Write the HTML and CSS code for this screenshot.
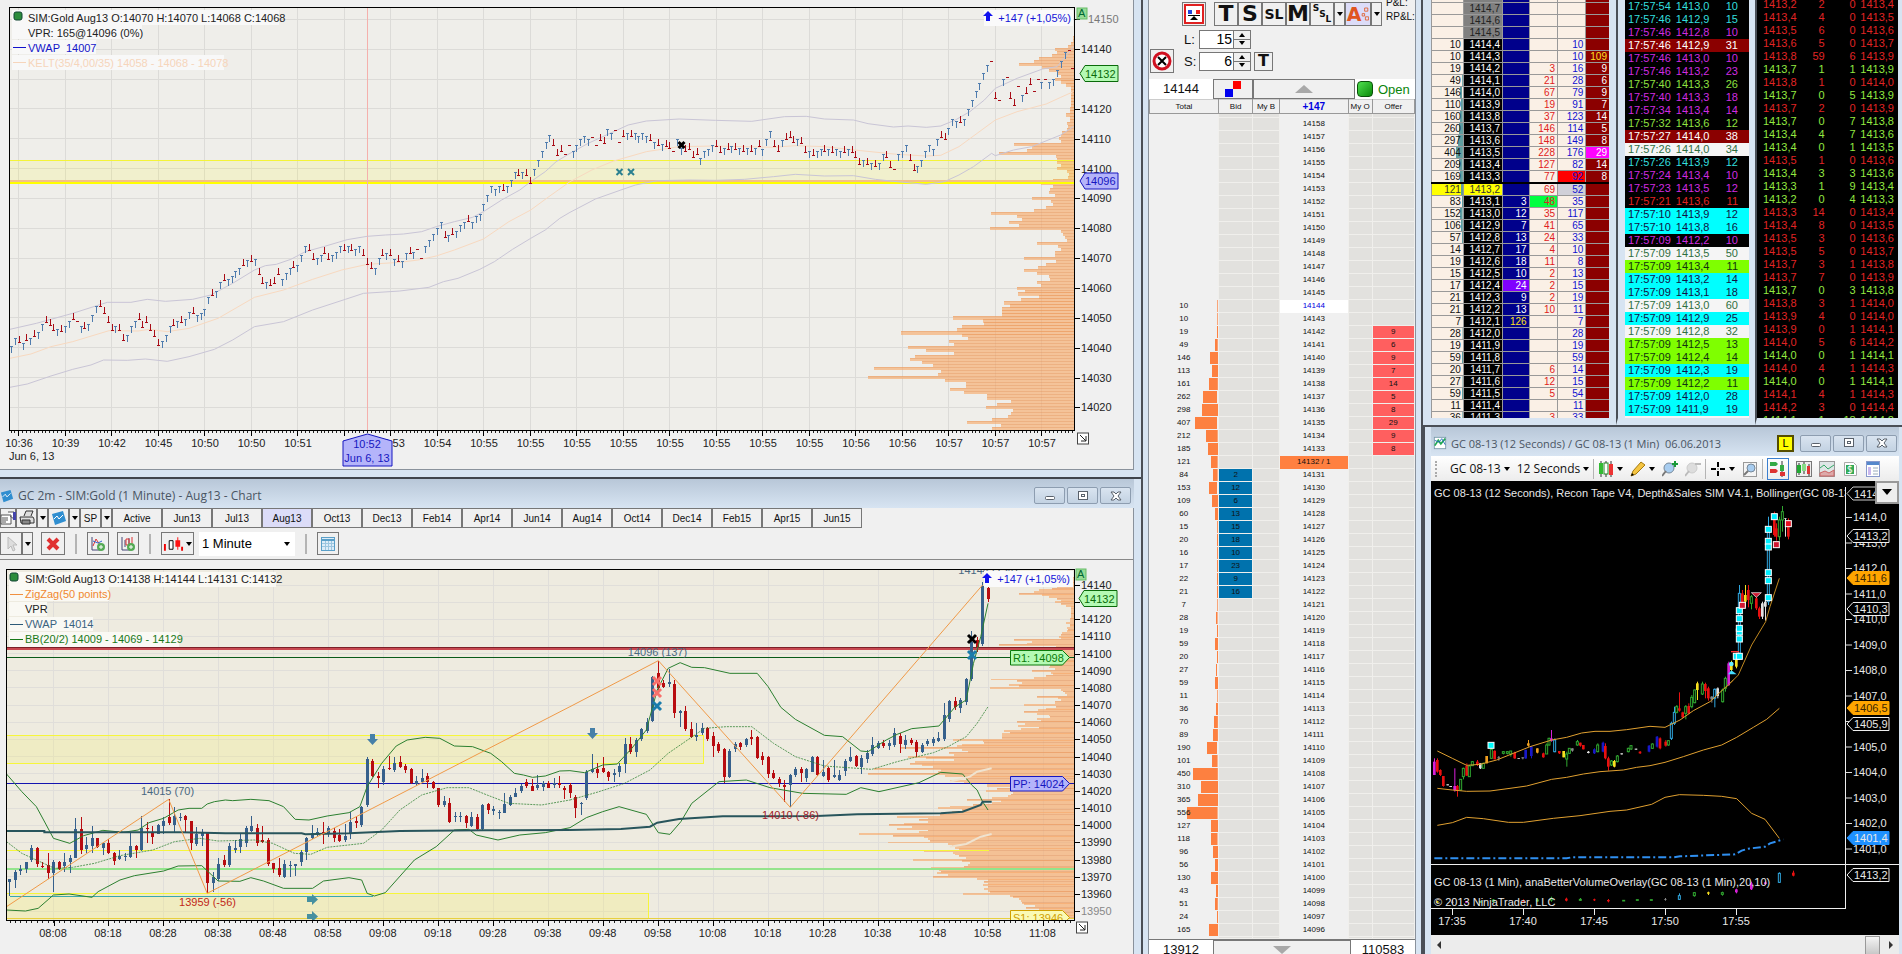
FILE: index.html
```
<!DOCTYPE html>
<html lang="en">
  <head>
    <meta charset="UTF-8" />
    <meta name="viewport" content="width=device-width, initial-scale=1.0" />
    <title>Trading Desktop</title>
    <link rel="stylesheet" href="styles.css">
  </head>
  <body>
    <main class="desktop">
      <!-- left: tick chart and minute chart -->
      <div class="col-left">
        <section class="window">
          <div class="pane">
            <svg id="tickChart" class="chart" viewBox="0 0 1133 469"></svg>
          </div>
        </section>

        <section class="window grow">
          <header class="titlebar">
            <svg class="icon" viewBox="0 0 16 16"><path d="M1 4 12 1l3 10-11 4z" fill="#2f8ed0"/><path d="M3 9l3-3 2 3 4-4" stroke="#fff" fill="none"/></svg>
            <h1>GC 2m - SIM:Gold (1 Minute) - Aug13 - Chart</h1>
            <div class="winbtns">
              <button aria-label="Minimize"><svg viewBox="0 0 14 12"><rect x="2.5" y="6.5" width="9" height="3" rx="1"/></svg></button>
              <button aria-label="Maximize"><svg viewBox="0 0 14 12"><rect x="2.5" y="1.5" width="9" height="8"/><rect x="5.5" y="4.5" width="3" height="2"/></svg></button>
              <button aria-label="Close"><svg viewBox="0 0 14 12"><path d="M2 2h3l2 2 2-2h3L9 6l3 4H9L7 8l-2 2H2l3-4z"/></svg></button>
            </div>
          </header>
          <div class="pane">
            <nav class="contracts" id="contracts">
              <button class="w16" aria-label="Properties"><svg class="icon" viewBox="0 0 16 16"><path d="M1 5h10v9H1zM8 2h6v7l-4-3" fill="#fff" stroke="#555"/><path d="M2 8h6M2 10h6M2 12h4" stroke="#555"/><path d="M13 2h3v8h-3z" fill="#44a"/></svg></button>
              <button class="w21" aria-label="Print"><svg class="icon" viewBox="0 0 16 16"><path d="M5 6 7 1h7l-2 5M1 7h13l1 2v4H2z" fill="#ddd" stroke="#333"/><path d="M3 10h8v4H3z" fill="#888" stroke="#333"/></svg></button>
              <button class="w11" aria-label="Print menu"><i class="tri"></i></button>
              <button class="w21" aria-label="Chart"><svg class="icon" viewBox="0 0 16 16"><path d="M1 4 12 1l3 10-11 4z" fill="#2f8ed0"/><path d="M3 9l3-3 2 3 4-4" stroke="#fff" fill="none"/></svg></button>
              <button class="w11" aria-label="Chart menu"><i class="tri"></i></button>
              <button class="w21">SP</button>
              <button class="w11" aria-label="SP menu"><i class="tri"></i></button>
            </nav>
            <div class="tools">
              <button class="w22" aria-label="Pointer"><svg class="icon" viewBox="0 0 16 16"><path d="M5 1v12l3-3 2 5 2-1-2-5h4z" fill="#ddd" stroke="#bbb"/></svg></button><button class="w11" aria-label="Pointer menu"><i class="tri"></i></button>
              <button class="w24 gap8" aria-label="Delete"><svg class="icon" viewBox="0 0 16 16"><path d="M3 3l10 10M13 3 3 13" stroke="#e03030" stroke-width="4"/></svg></button>
              <span class="sep"></span>
              <button class="w22" aria-label="Add study"><svg class="icon" viewBox="0 0 16 16"><path d="M2 1v13h8" stroke="#447" fill="none"/><path d="M3 10 6 3l4 6" stroke="#d33" fill="none"/><path d="M3 5l5 2 4-2" stroke="#36c" fill="none"/><circle cx="11" cy="11" r="4" fill="#5a5"/><path d="M9 11h4M11 9v4" stroke="#fff"/></svg></button>
              <button class="w22 gap8" aria-label="Add instrument"><svg class="icon" viewBox="0 0 16 16"><path d="M2 1v13h8M5 4v7M9 2v6" stroke="#447" fill="none"/><path d="M6 3h3v6H6zM12 1v7" stroke="#d33" fill="none"/><circle cx="11" cy="11" r="4" fill="#5a5"/><path d="M9 11h4M11 9v4" stroke="#fff"/></svg></button>
              <span class="sep"></span>
              <button class="w33" aria-label="Bar style"><svg class="icon wide" viewBox="0 0 22 16"><path d="M2 8v7M20 11v4" stroke="#e00" stroke-width="2"/><path d="M6.5 4.5h4v9h-4z" fill="#fff" stroke="#000"/><path d="M13 4h5v7h-5zM15 1h1v13h-1z" fill="#f11"/></svg><i class="tri"></i></button>
              <div class="interval">
                <select aria-label="Interval"><option>1 Minute</option></select>
                <i class="tri"></i>
              </div>
              <span class="sep"></span>
              <button class="w22" aria-label="Data table"><svg class="icon" viewBox="0 0 16 16"><rect x="1.5" y="1.5" width="13" height="13" fill="#dcecf8" stroke="#5a9fc8"/><path d="M2 4h12" stroke="#5a9fc8" stroke-width="2"/><path d="M2 7.5h12M2 10.5h12M5.5 5v9M8.5 5v9M11.5 5v9" stroke="#9cc6e0"/></svg></button>
            </div>
            <svg id="minuteChart" class="chart" viewBox="0 560 1133 394"></svg>
          </div>
        </section>
      </div>

      <!-- middle: price ladder -->
      <section class="window ladder">
        <div class="pane">
          <div class="ladder-tools">
            <div class="row1">
              <button class="w24" aria-label="Center"><svg class="icon big" viewBox="0 0 20 20"><rect x="1" y="1" width="18" height="18" fill="#fff" stroke="#e02020" stroke-width="2"/><path d="M4 6h4v4H4z" fill="#2244dd"/><path d="M12 6h4v4h-4z" fill="#e22"/><path d="M4 11h12v1H4zM10 12l4 4H6z"/></svg></button>
              <button class="letter gap8">T</button><button class="letter">S</button><button class="letter small">SL</button><button class="letter">M</button><button class="letter tiny" aria-label="SSL"><span class="hi">S</span><span>S</span><span class="lo">L</span></button><button class="w11" aria-label="Order menu"><i class="tri"></i></button><button class="letter auto">A<svg class="dots" viewBox="0 0 10 20"><path d="M4.500 2.500h4v4h-4zM1.500 9.500h3v3h-3zM5.500 13.500h4v4h-4z" fill="none" stroke="#e05520"/></svg></button><button class="w11" aria-label="Auto menu"><i class="tri"></i></button>
              <div class="pnl"><span>P&amp;L:</span><span>RP&amp;L:</span></div>
            </div>
            <div class="row2">
              <label for="qtyL">L:</label><input id="qtyL" type="text" value="15"><span class="spin"><i class="tri up"></i><i class="tri"></i></span>
            </div>
            <div class="row2">
              <button class="w24 cancel" aria-label="Cancel all"><svg class="icon big" viewBox="0 0 20 20"><circle cx="10" cy="10" r="8" fill="#fff" stroke="#d01020" stroke-width="3"/><path d="M6 6l8 8M14 6l-8 8" stroke="#000" stroke-width="2"/></svg></button>
              <label for="qtyS">S:</label><input id="qtyS" type="text" value="6"><span class="spin"><i class="tri up"></i><i class="tri"></i></span>
              <button class="letter one">T</button>
            </div>
          </div>
          <div class="quote">
            <span class="last">14144</span>
            <button class="flag" aria-label="Flatten"><svg viewBox="0 0 16 16"><path d="M8 0h8v8H8z" fill="#f00"/><path d="M0 8h8v8H0z" fill="#00e"/></svg></button>
            <button class="up-btn" aria-label="Scroll up"><i class="tri big up"></i></button>
            <span class="state"><i class="led"></i>Open</span>
          </div>
          <table class="dom">
            <colgroup><col class="c-total"><col class="c-bid"><col class="c-myb"><col class="c-price"><col class="c-myo"><col class="c-offer"></colgroup>
            <thead><tr><th>Total</th><th>Bid</th><th>My B</th><th class="chg">+147</th><th>My O</th><th>Offer</th></tr></thead>
            <tbody id="ladder"></tbody>
          </table>
          <div class="quote bottom">
            <span class="last">13912</span>
            <button class="down-btn" aria-label="Scroll down"><i class="tri big"></i></button>
            <span class="last">110583</span>
          </div>
        </div>
      </section>

      <!-- right: depth, tape, bid/ask and the dark chart -->
      <div class="col-right">
        <div class="top-right">
          <section class="window depth"><table><colgroup><col class="d1"><col class="d2"><col class="d3"><col class="d4"><col class="d5"><col class="d6"></colgroup><tbody id="depth"></tbody></table></section>
          <section class="window tape"><table><tbody id="tape"></tbody></table></section>
          <section class="window quotes"><table><tbody id="quotes"></tbody></table></section>
        </div>
        <section class="window ninja">
          <header class="titlebar">
            <svg class="icon" viewBox="0 0 16 16"><rect x="1.5" y="1.5" width="13" height="13" fill="#fff" stroke="#79a"/><path d="M2 11 6 5l3 4 5-6" stroke="#2a5" stroke-width="2" fill="none"/><path d="M2 5l5 2 3-4 4 7" stroke="#26b" fill="none"/></svg>
            <h1>GC 08-13 (12 Seconds) / GC 08-13 (1 Min)&nbsp; 06.06.2013</h1>
            <span class="link">L</span>
            <div class="winbtns">
              <button aria-label="Minimize"><svg viewBox="0 0 14 12"><rect x="2.5" y="6.5" width="9" height="3" rx="1"/></svg></button>
              <button aria-label="Maximize"><svg viewBox="0 0 14 12"><rect x="2.5" y="1.5" width="9" height="8"/><rect x="5.5" y="4.5" width="3" height="2"/></svg></button>
              <button aria-label="Close"><svg viewBox="0 0 14 12"><path d="M2 2h3l2 2 2-2h3L9 6l3 4H9L7 8l-2 2H2l3-4z"/></svg></button>
            </div>
          </header>
          <div class="ninja-tools">
            <span class="grip"></span>
            <button>GC 08-13 <i class="tri"></i></button>
            <button>12 Seconds <i class="tri"></i></button>
            <span class="sep"></span>
            <button aria-label="Chart style"><svg class="icon" viewBox="0 0 16 16"><path d="M3 0v16M8 0v16M13 0v16" stroke="#333"/><rect x="1" y="2" width="4" height="11" fill="#3b3"/><rect x="6" y="2" width="4" height="11" fill="#fff" stroke="#282"/><rect x="11" y="3" width="4" height="11" fill="#e33"/></svg><i class="tri"></i></button>
            <button aria-label="Draw"><svg class="icon" viewBox="0 0 16 16"><path d="M1 15l2-5 8-9 4 3-9 9z" fill="#f5c542" stroke="#a57a10"/><path d="M1 15l1-3 2 2z"/></svg><i class="tri"></i></button>
            <button aria-label="Zoom in"><svg class="icon" viewBox="0 0 16 16"><circle cx="7" cy="7" r="5" fill="#a8cdf0" stroke="#789"/><path d="M4 10 0 15" stroke="#777" stroke-width="2"/><path d="M10 3h6M13 0v6" stroke="#1a9a3a" stroke-width="2"/></svg></button>
            <button aria-label="Zoom out"><svg class="icon" viewBox="0 0 16 16"><circle cx="7" cy="7" r="5" fill="#ddd" stroke="#ccc"/><path d="M4 10 0 15M10 3h6" stroke="#bbb" stroke-width="2"/></svg></button>
            <span class="sep"></span>
            <button aria-label="Crosshair"><svg class="icon" viewBox="0 0 16 16"><path d="M8 1v5M8 10v5M1 8h5M10 8h5" stroke="#000" stroke-width="2"/><path d="M7.5 8h1" stroke="#000"/></svg><i class="tri"></i></button>
            <button aria-label="Data box"><svg class="icon" viewBox="0 0 16 16"><rect x="1.5" y="1.5" width="13" height="14" fill="#f4f4f4" stroke="#999"/><circle cx="9" cy="7" r="4" fill="#a8cdf0" stroke="#789"/><path d="M6 10l-4 4" stroke="#777" stroke-width="2"/></svg></button>
            <span class="sep"></span>
            <button class="on" aria-label="Chart trader"><svg class="icon" viewBox="0 0 16 16"><path d="M12 0v16" stroke="#333"/><path d="M0 1h6l2 2-2 2H0zM10 4h4v6h-4z" fill="#3a4"/><path d="M0 8h6l2 2-2 2H0zM10 11h5v4h-5z" fill="#d33"/></svg></button>
            <button aria-label="Data series"><svg class="icon" viewBox="0 0 16 16"><rect x="0.5" y="0.5" width="15" height="15" fill="#eee" stroke="#777"/><path d="M3 2v12M8 1v12M13 3v12" stroke="#333"/><path d="M1 4h4v8H1z" fill="#2a3"/><path d="M6 3h4v7H6z" fill="#8d8"/><path d="M11 5h3v8h-3z" fill="#d33"/></svg></button>
            <button aria-label="Indicators"><svg class="icon" viewBox="0 0 16 16"><rect x="0.5" y="0.5" width="15" height="15" fill="#dfe6e6" stroke="#999"/><path d="M1 7l4-3 4 4 6-4" stroke="#3a6" fill="none"/><path d="M1 12l5-2 4 2 5-3v6H1z" fill="#daa" stroke="#c66"/></svg></button>
            <button aria-label="Strategies"><svg class="icon" viewBox="0 0 16 16"><path d="M2.5 1.5h9l3 3v10h-12z" fill="#fff" stroke="#aaa"/><path d="M4 4h8v9H4z" fill="#3a5"/><text x="5" y="12" font-size="10" fill="#fff">$</text></svg></button>
            <button aria-label="Properties"><svg class="icon" viewBox="0 0 16 16"><rect x="1.5" y="0.5" width="13" height="15" fill="#fff" stroke="#89c"/><path d="M2 1h12v3H2z" fill="#58c"/><path d="M3 6h3v8H3z" fill="#c9b8ee"/><path d="M8 7h5M8 10h5M8 13h5" stroke="#9ab"/></svg></button>
          </div>
          <svg id="ninjaChart" class="chart" viewBox="1431 481 468 454"></svg>
          <div class="scroll"><i class="tri left"></i><span class="thumb"></span><i class="tri right"></i></div>
        </section>
      </div>
    </main>
    <script src="script.js"></script>
  </body>
</html>
```
FILE: styles.css
```
* {
  box-sizing: border-box;
}

body {
  margin: 0;
  height: 100vh;
  overflow: hidden;
  background-color: #d7e4f2;
  color: #111;
  font-family: "Liberation Sans", Arial, sans-serif;
  font-size: 10px;
}

h1 {
  margin: 0;
  flex: 1;
  font-family: "Open Sans", sans-serif;
  font-size: 12px;
  font-weight: normal;
  color: #4a5563;
  white-space: nowrap;
}

button {
  font-family: inherit;
  color: inherit;
  background: #f0f0f0;
  border: 1px solid #777;
  padding: 0;
  display: flex;
  align-items: center;
  justify-content: center;
}

.desktop {
  display: grid;
  grid-template-columns: 1141fr 282fr 479fr;
  height: 100%;
}

.col-left,
.col-right {
  display: flex;
  flex-direction: column;
  min-width: 0;
  height: 100vh;
}

.window {
  background-color: #d7e4f2;
  min-width: 0;
}

.col-left .window {
  padding-right: 7px;
  padding-bottom: 7px;
  border-bottom: 2px solid #3f444c;
}

.col-left .grow {
  flex: 1;
  overflow: hidden;
  padding-bottom: 0;
  border-bottom: none;
}

.pane {
  background-color: #f0f0f0;
  border-right: 1px solid #8a929c;
}

.col-left .window:first-child .pane {
  border-bottom: 1px solid #8a929c;
}

.grow .pane {
  height: 460px;
}

.chart {
  display: block;
  width: 100%;
  height: auto;
}

.chart text {
  font-size: 11px;
}

.chart polyline {
  fill: none;
  vector-effect: non-scaling-stroke;
}

.crisp {
  shape-rendering: crispEdges;
}

.icon {
  width: 16px;
  height: 16px;
  flex: none;
}

.icon.wide {
  width: 21px;
}

.icon.big {
  width: 20px;
  height: 20px;
}

/* window chrome */
.titlebar {
  display: flex;
  align-items: center;
  gap: 4px;
  height: 29px;
  padding: 4px 3px 0 0;
  background: linear-gradient(#b8c7d8, #d7e4f2);
}

.titlebar .icon {
  width: 14px;
  height: 14px;
}

.winbtns {
  display: flex;
  gap: 2px;
}

.winbtns button {
  width: 31px;
  height: 17px;
  border: 1px solid #8d9db0;
  border-radius: 2px;
  background: linear-gradient(#d9e4f0, #c3d2e2);
}

.winbtns svg {
  width: 14px;
  height: 12px;
  fill: #fff;
  stroke: #59616b;
}

.tri {
  width: 0;
  height: 0;
  border: 3px solid transparent;
  border-top: 4px solid #000;
  border-bottom: none;
}

.tri.up {
  border-bottom: 4px solid #000;
  border-top: none;
}

.tri.big {
  border-width: 8px 9px 0;
  border-top-color: #a8a8a8;
}

.tri.big.up {
  border-width: 0 9px 8px;
  border-bottom-color: #a8a8a8;
}

.tri.left {
  border: 4px solid transparent;
  border-right-color: #333;
  border-left: none;
}

.tri.right {
  border: 4px solid transparent;
  border-left-color: #333;
  border-right: none;
}

.contracts {
  display: flex;
  height: 20px;
}

.contracts button {
  width: 50px;
  height: 20px;
  font-size: 10px;
}

.contracts .active {
  background: #dcdcf8;
}

.contracts .w16 {
  width: 16px;
}

.contracts .w21 {
  width: 21px;
}

.contracts .w11,
.w11 {
  width: 11px;
}

.w22 {
  width: 22px;
}

.w24 {
  width: 24px;
}

.w33 {
  width: 33px;
  gap: 2px;
}

.tools {
  display: flex;
  align-items: center;
  height: 32px;
  border-bottom: 1px solid #888;
}

.tools button {
  height: 23px;
}

.tools .gap8 {
  margin-left: 8px;
}

.sep {
  width: 2px;
  height: 20px;
  margin: 0 10px;
  background: #b4b4b4;
}

.interval {
  display: flex;
  align-items: center;
  width: 96px;
  height: 24px;
  margin-left: 5px;
  padding-right: 5px;
  background-color: #fff;
}

.interval select {
  flex: 1;
  padding: 0 0 0 3px;
  border: none;
  appearance: none;
  background: none;
  font-family: inherit;
  font-size: 13px;
}

/* price ladder */
.ladder {
  display: flex;
  flex-direction: column;
  padding: 0 5px;
  border-left: 2px solid #4a4f57;
  border-right: 2px solid #4a4f57;
  height: 100vh;
  overflow: hidden;
}

.ladder .pane {
  border-left: 1px solid #8a929c;
  flex: 1;
}

.ladder-tools {
  height: 79px;
  padding-top: 2px;
}

.row1 {
  display: flex;
  height: 24px;
  margin: 0 0 3px 33px;
}

.row1 button {
  height: 24px;
}

.letter {
  width: 24px;
  font-family: "DejaVu Sans", sans-serif;
  font-size: 22px;
  font-weight: bold;
  line-height: 20px;
}

.letter.small {
  font-size: 14px;
}

.letter.tiny {
  font-size: 9px;
}

.hi {
  align-self: flex-start;
  line-height: 11px;
}

.lo {
  align-self: flex-end;
  line-height: 11px;
}

.letter.auto {
  width: 26px;
  font-size: 19px;
  color: #e05520;
  background: #dcdcf8;
}

.dots {
  width: 8px;
  height: 20px;
}

.row1 .gap8 {
  margin-left: 8px;
}

.pnl {
  display: flex;
  flex-direction: column;
  margin: -6px 0 0 4px;
  font-size: 10px;
  line-height: 14px;
}

.row2 {
  display: flex;
  align-items: center;
  height: 20px;
  margin: 0 0 2px 1px;
}

.row2 label {
  width: 15px;
  font-size: 13px;
}

.row2 label:first-child {
  margin-left: 34px;
}

.row2 .cancel {
  height: 24px;
  margin-right: 10px;
}

.row2 input {
  width: 34px;
  height: 19px;
  padding: 0 1px;
  border: 1px solid #777;
  border-right: none;
  font-family: inherit;
  font-size: 14px;
  text-align: right;
}

.spin {
  display: flex;
  flex-direction: column;
  align-items: center;
  justify-content: space-around;
  width: 18px;
  height: 19px;
  border: 1px solid #777;
  background: linear-gradient(#f0f0f0 8px, #777 8px, #777 9px, #f0f0f0 9px);
}

.letter.one {
  width: 19px;
  height: 19px;
  margin-left: 3px;
  font-size: 16px;
}

.quote {
  display: flex;
  height: 20px;
}

.quote .last {
  width: 64px;
  background: #fff;
  font-size: 13px;
  line-height: 20px;
  text-align: center;
}

.flag {
  width: 40px;
}

.flag svg {
  width: 16px;
  height: 16px;
}

.up-btn {
  flex: 1;
}

.state {
  display: flex;
  align-items: center;
  gap: 5px;
  width: 60px;
  padding-left: 2px;
  background: #fff;
  color: #0a840a;
  font-size: 13px;
}

.led {
  width: 16px;
  height: 16px;
  border: 1px solid #0a500a;
  border-radius: 4px;
  background: linear-gradient(135deg, #4fe04f, #0a8a0a);
}

.quote.bottom {
  border-top: 1px solid #777;
}

.down-btn {
  flex: 1;
}

table {
  width: 100%;
  table-layout: fixed;
  border-collapse: collapse;
}

.dom th {
  height: 14px;
  padding: 0;
  border: 1px solid #999;
  border-top-color: #ccc;
  font-size: 8px;
  font-weight: normal;
  line-height: 11px;
}

.dom .chg {
  color: #0000e0;
  font-size: 10px;
  font-weight: bold;
}

.dom td {
  height: 13px;
  padding: 0;
  font-size: 8px;
  line-height: 12px;
  text-align: center;
  overflow: hidden;
}

.dom .first td {
  height: 4px;
  line-height: 3px;
}

.dom .last-row td {
  height: 2px;
  line-height: 1px;
}

.c-total {
  width: 26%;
}

.c-bid {
  width: 13%;
}

.c-myb {
  width: 10%;
}

.c-price {
  width: 26%;
}

.c-myo {
  width: 9%;
}

.dom .total {
  background: linear-gradient(#fd8040, #fd8040) right top no-repeat;
  border-bottom: 1px solid #f0f0f0;
}

.dom .slot {
  background-color: #e2e1de;
  border: 1px solid #f0efec;
  border-width: 0 1px 1px;
}

.dom .bid {
  background-color: #0072ad;
}

.dom .offer {
  background-color: #ff5f5f;
}

.dom .trade {
  background-color: #ff8040;
}

.dom .high {
  background-color: #fff;
  color: #0000e0;
}

/* depth, tape and bid/ask lists */
.top-right {
  display: grid;
  grid-template-columns: 193fr 139fr 147fr;
  height: 425px;
}

.top-right .window {
  height: 425px;
  overflow: hidden;
  border-bottom: 7px solid #d7e4f2;
}

.depth {
  padding: 0 7px 0 8px;
}

.depth table {
  background: #faf0e6;
}

.depth td {
  height: 12px;
  padding: 0 2px;
  border-bottom: 1px solid #999;
  border-left: 1px solid #999;
  line-height: 11px;
  text-align: right;
}

.depth .stub td {
  height: 2px;
  line-height: 1px;
}

.d1 {
  width: 18%;
}

.d2 {
  width: 22%;
}

.d3 {
  width: 15%;
}

.d4,
.d5 {
  width: 16%;
}

.depth .vol {
  background: linear-gradient(#5f9ea0, #5f9ea0) right top no-repeat;
}

.depth .px {
  background: #000;
  color: #fff;
}

.depth .grey {
  background: #808080;
  color: #222;
}

.depth .buy {
  background: #00008b;
  color: #fff;
}

.depth .sell {
  background: #8b0000;
  color: #fff;
}

.depth .cr {
  color: #e02020;
}

.depth .cb {
  color: #1010d0;
}

.depth .mark td {
  border-top: 2px solid #000;
}

.depth .yel {
  background-color: #ff0;
  color: #333;
}

.tape {
  border-left: 2px solid #4a4f57;
  padding: 0 6px 0 7px;
}

.tape table {
  background: #000;
}

.tape td,
.quotes td {
  height: 13px;
  padding: 0;
  font-size: 11px;
  line-height: 13px;
}

.tape td:first-child {
  width: 41%;
  padding-left: 3px;
}

.tape td:last-child,
.quotes td:nth-child(n + 2) {
  text-align: right;
}

.tape td:last-child {
  width: 24%;
  padding-right: 11px;
}

.tape .c {
  color: #33dede;
}

.tape .m {
  color: #d02ce0;
}

.tape .g {
  color: #8fe040;
}

.tape .r {
  color: #e02424;
}

.tape .R {
  background: #8b0000;
  color: #fff;
}

.tape .W {
  background: #f5f5f5;
  color: #2f6f3f;
}

.tape .C {
  background: #00ffff;
  color: #114;
}

.tape .G {
  background: #7fff00;
  color: #131;
}

.quotes {
  border-left: 2px solid #4a4f57;
  padding-right: 4px;
}

.quotes table {
  background: #000;
  margin-top: -2px;
}

.quotes td:first-child {
  width: 31%;
  padding-left: 6px;
}

.quotes td:nth-child(2) {
  width: 17%;
}

.quotes td:nth-child(3) {
  width: 22%;
}

.quotes td:last-child {
  padding-right: 4px;
}

.quotes .r {
  color: #e02424;
}

.quotes .g {
  color: #92e840;
}

/* dark chart window */
.ninja {
  flex: 1;
  padding: 0 3px 0 6px;
  border-top: 2px solid #4a4f57;
  border-left: 2px solid #4a4f57;
}

.ninja .titlebar {
  padding: 3px 2px 0;
}

.ninja h1 {
  font-size: 11px;
}

.link {
  width: 17px;
  height: 17px;
  margin-right: 2px;
  border: 2px solid #554d00;
  background: #ff0;
  color: #000;
  font-size: 11px;
  line-height: 13px;
  text-align: center;
}

.ninja-tools {
  display: flex;
  align-items: center;
  gap: 7px;
  height: 25px;
  background: linear-gradient(#fff, #ececec);
}

.ninja-tools button {
  gap: 3px;
  border: none;
  background: none;
  font-family: "Open Sans", sans-serif;
  font-size: 12px;
  white-space: nowrap;
}

.ninja-tools .on {
  width: 22px;
  height: 22px;
  border: 1px solid #3a7fd0;
}

.ninja-tools .sep {
  width: 1px;
  margin: 0 -3px;
}

.grip {
  width: 2px;
  height: 16px;
  margin: 0 6px 0 4px;
  border-left: 2px dotted #aaa;
}

#ninjaChart {
  background: #000;
}

#ninjaChart text {
  fill: #e8e8e8;
}

#ninjaChart .dark {
  fill: #402800;
}

.scroll {
  display: flex;
  align-items: center;
  height: 20px;
  padding: 0 6px;
  background: #ececec;
}

.thumb {
  width: 15px;
  height: 19px;
  margin: 0 9px 0 auto;
  border: 1px solid #999;
  background: linear-gradient(#f4f4f4, #c8c8c8);
}
```
FILE: script.js
```
const $ = (id) => document.getElementById(id);

// ---------- svg helpers ----------
const rect = (x, y, w, h, fill, extra = "") =>
  `<rect x="${x}" y="${y}" width="${w}" height="${h}" fill="${fill}" ${extra}/>`;
const line = (x1, y1, x2, y2, c, w = 1, extra = "") =>
  `<line x1="${x1}" y1="${y1}" x2="${x2}" y2="${y2}" stroke="${c}" stroke-width="${w}" ${extra}/>`;
const text = (x, y, s, c = "#222", extra = "") =>
  `<text x="${x}" y="${y}" fill="${c}" xml:space="preserve" ${extra}>${s}</text>`;
const poly = (pts, c, w = 1, extra = "") =>
  `<polyline points="${pts}" stroke="${c}" stroke-width="${w}" ${extra}/>`;
const group = (x, y, kx, ky, s) =>
  `<g transform="translate(${x} ${y}) scale(${kx} ${ky})">${s}</g>`;
const cross = (x, y, r, c, w = 3) =>
  `<path d="M${x - r} ${y - r}l${2 * r} ${2 * r}M${x + r} ${y - r}l${-2 * r} ${2 * r}" stroke="${c}" stroke-width="${w}"/>`;

const KX = 0.3635;
const KY = 1 / 3;

// left edge of each volume row, one per price from 14144 down
const profile = (
  "1385 1383 1380 1370 1335 1340 1326 1290 1278 1237 1300 1318 1340 1350 1335 1350 1365 1378 1380 1380 " +
  "1378 1380 1378 1378 1376 1376 1366 1375 1376 1368 1370 1368 1355 1350 1345 1350 1222 1272 1258 1182 " +
  "1338 1340 1340 1352 1340 1368 1372 1370 1328 1295 1330 1320 1318 1335 1272 1325 1328 1310 1278 1158 " +
  "1230 1245 1208 1235 1157 1350 1358 1362 1368 1286 1342 1350 1335 1336 1250 1338 1310 1288 1250 1285 " +
  "1318 1320 1285 1297 1230 1252 1233 1290 1240 1195 1212 1188 1188 1188 1053 1138 1140 1078 1065 912 " +
  "1080 1095 1042 1056 930 980 1056 950 937 968 1000 836 1020 1012 820 1032 1090 1090 1045 1085 " +
  "1148 1148 1215 1175 1145 1220 1215 1205 1162 1092 1185 1162 1110 1045 1012 1080 1050 1040 1018 900 " +
  "985 960 985 920 878 940 900 985 960 795 890 975 985 990 875 1040 1050 1060 1070 975 " +
  "1055 1060 1070 1090 945 1080 1100 1095 1085 993 1015 1020 1010 1040 998 1120 1150 1140 1150 1138 " +
  "1150 1140 1150 1155 1082 1210 1220 1235 1240 1245 1250 1280 1255 1290 1270 1260 1290 1260 1280"
).split(" ").map((v) => (1387 - v) * KX);

function drawProfile(right, y0, step, bottom) {
  let s = "";
  profile.forEach((w, i) => {
    const y = y0 + i * step;
    if (y + step > bottom) return;
    s += rect(right - w, y, w, step + 0.2, "#f7a868", 'opacity=".62"');
    if (step > 2) s += rect(right - w, y, w, 1, "#e09058", 'opacity=".35"');
    else if (i % 3 == 0) s += rect(right - w, y, w, 1, "#d88c5c", 'opacity=".3"');
  });
  return s;
}

function tag(x, y, s, c, bg, w = 38) {
  return (
    `<path d="M${x} ${y}l5 -8h${w - 5}v16h${5 - w}z" fill="${bg}" stroke="${c}"/>` + text(x + 5, y + 4, s, c)
  );
}

function frameIcons(x, y, yb) {
  return (
    rect(x + 2, y, 10, 11, "#98dc98", 'stroke="#6b6" ') + text(x + 3, y + 9, "A", "#063") +
    rect(x + 2.5, yb, 11, 11, "#fff", 'stroke="#444"') +
    `<path d="M${x + 5} ${yb + 2}l6 6m0 -5v5h-5" stroke="#222" fill="none"/>`
  );
}

const led = (x, y) => rect(x, y, 8, 8, "#2c8c3c", 'rx="2" stroke="#143" ');

// ---------- tick chart ----------
// b = up tick, r = down tick, d = flat
const ticks = [
  [10.9, 428.9, "b349 b341 r339 b346 r337 b341 r333 b335 b327 r319 r322 r327 b332 r328 b329 b324 r316 d321 b329 r325 b327 b318 b309 r303 r310 r319 r327 b329 r327 r337 b338 b329 b324 r316 r324 r319 r327 r333 r342 b344 b338 b329 r322 b324 r319 b322 b315 r310 b318 b316 b312 b300 r292 b294 b285 r277 b282 b279 b274 b271 r262 b263 r258 b262 r271 r280 b285 r282 r280 r271 b282 b276 b271 r264 b268 b258 b249 r247 r256 b261 b258 r250 r256 b258 b255 b249 r247 b249 r247 b252 b249 r252 r261 r265 b271 b261 r252 b256 r252 b262 r258 b264 b256 r250 b255 d249 d258 b249 b243"],
  [432.9, 568.9, "b237 b231 b225 r234 b238 r231 b234 b228 b225 r218 b225 b219 b217 b207 b198 b189 b192 b189 r187 b189 b183 b175 r172 b175 r172 r180 b172 b163 b154 b145 b138 r142 r152 r148 d154 d145"],
  [572.5, 1072.4, "b154 b148 b142 b139 b142 d137 d145 r137 r140 b132 b136 d130 d142 r133 b136 r133 b136 b139 b136 b139 r137 b145 r142 b147 r143 r145 d151 b142 b151 r148 r146 r154 r151 b161 b154 b152 b148 r143 r149 b151 r146 b149 r146 b151 r148 b151 r148 b151 r143 b152 b142 b134 r143 r148 b143 r136 r134 r139 b142 r140 r149 b154 r152 b154 b152 r148 b152 r149 b152 b154 r149 b152 r149 r154 r161 b163 r161 b166 r163 b166 b157 r154 r164 d169 b157 b154 b148 r157 r167 b169 b163 b154 b148 b152 b142 r134 r136 b131 b122 b124 r119 b122 b112 b103 b94 b86 b76 b68 d61 r95 d100 b82 d77 r95 r102 d86 b98 r90 r81 d91 d79 b85 d79 b85 b82 b73 b64 b55 d50 d68"],
];

const tickTimes = "10:36 10:39 10:42 10:45 10:50 10:50 10:51 10:52 10:53 10:54 10:55 10:55 10:55 10:55 10:55 10:55 10:55 10:55 10:56 10:56 10:57 10:57 10:57".split(" ");

function drawTickChart() {
  let s = rect(9, 7, 1065, 423, "#efeeea");
  const py = (p) => 19.3 + (14150 - p) * 2.986;
  let g = "";
  for (let p = 14020; p <= 14150; p += 10) g += line(9, py(p), 1074, py(p), "#dcdbd8");
  tickTimes.forEach((t, i) => (g += line(18.5 + i * 46.5, 7, 18.5 + i * 46.5, 430, "#dcdbd8")));
  g += drawProfile(1074, 35.7, 2.986, 430);
  g += rect(9, 160, 1065, 23, "#ff0", 'opacity=".12"');
  g += line(9, 160.5, 1074, 160.5, "#f4f436") + line(9, 180.5, 1074, 180.5, "#f3c08a", 2) + line(9, 182.5, 1074, 182.5, "#ff0", 2);
  g += line(367.5, 7, 367.5, 430, "#f5b0ac");
  s += `<g class="crisp">${g}</g>`;

  const env = "#c9c5d6", mid = "#f8d9c0";
  s += group(0, 240, KX, KY,
    poly("27,268 100,250 200,220 295,187 360,187 405,178 455,184 530,178 580,165 640,130 700,90 730,77 760,73 800,58 840,35 890,20 955,-1", env) +
    poly("27,355 85,342 140,320 200,305 300,272 380,273 410,268 460,275 520,265 600,235 700,172 780,150 860,118 940,90 1010,73 1100,67 1150,60 1200,48 1250,30 1330,-3", mid) +
    poly("27,442 75,432 140,408 200,388 250,375 285,360 350,361 400,357 460,364 520,350 590,328 640,300 700,260 780,245 860,210 950,178 1000,160 1100,153 1180,142 1220,125 1260,115 1320,88 1360,65 1410,28 1460,-5", env));
  s += group(0, 0, KX, KY,
    poly("955,719 1010,709 1060,705 1110,702 1160,695 1200,680 1250,665 1300,652 1330,635 1380,600 1430,570 1460,545 1500,515 1530,485 1568,460", env) +
    poly("1330,717 1400,665 1460,630 1510,590 1568,545", mid) +
    poly("1460,715 1500,690 1540,655 1568,637", env));
  s += group(570, 0, KX, KY,
    poly("0,460 50,430 100,405 130,390 160,375 210,363 300,357 400,361 500,364 590,350 650,349 700,357 780,360 820,371 890,381 930,378 980,382 1020,378 1060,360 1100,335 1140,300 1170,265 1230,235 1300,207 1340,200 1385,140", env) +
    poly("0,545 60,510 120,483 210,455 300,440 400,438 560,442 620,437 700,440 800,452 900,463 980,468 1020,466 1070,440 1120,400 1170,360 1230,335 1310,312 1350,292 1385,275", mid) +
    poly("0,637 70,597 140,570 180,555 240,542 330,540 400,541 480,538 560,530 620,523 700,528 780,527 840,538 900,545 980,553 1030,545 1070,525 1110,500 1160,460 1170,467 1220,450 1270,440 1350,405 1385,380", env));

  let b = "";
  ticks.forEach(([x0, x1, list]) => {
    const arr = list.split(" ");
    arr.forEach((t, i) => {
      const x = Math.round(x0 + ((x1 - x0) * i) / (arr.length - 1));
      const y = +t.slice(1);
      if (t[0] == "b") b += rect(x, y - 3, 1, 7, "#4f7cae") + rect(x - 1, y - 3, 3, 1, "#4f7cae");
      if (t[0] == "r") b += rect(x, y - 3, 1, 7, "#a80c16") + rect(x - 1, y + 3, 3, 1, "#a80c16");
      if (t[0] == "d") b += rect(x - 1, y, 3, 1, "#a80c16");
    });
  });
  s += `<g class="crisp">${b}</g>`;
  s += cross(681.5, 145, 3, "#000") + cross(619.5, 172, 3, "#2a8090", 2) + cross(631, 172, 3, "#2a8090", 2);

  // legend
  s += rect(12, 10, 267, 15, "#f8f8f8") + rect(12, 25, 130, 14, "#f8f8f8") + rect(12, 40, 84, 14, "#f8f8f8") + rect(12, 55, 212, 15, "#f8f8f8");
  s += led(14, 12) + text(28, 22, "SIM:Gold Aug13 O:14070 H:14070 L:14068 C:14068") + text(28, 37, "VPR: 165@14096 (0%)");
  s += line(13, 47.5, 26, 47.5, "#11c") + text(28, 52, "VWAP  14007", "#1414c8");
  s += line(13, 62.5, 26, 62.5, "#f6d5bb") + text(28, 67, "KELT(35/4,00/35) 14058 - 14068 - 14078", "#f6d5bb");
  s += rect(984, 10, 89, 16, "#fafafa") + `<path d="M988 11l5 5h-3v5h-4v-5h-3z" fill="#11e"/>` + text(1071, 22, "+147 (+1,05%)", "#1414d8", 'text-anchor="end"');

  // axes
  let a = rect(9, 7, 1066, 1, "#000") + rect(9, 7, 1, 424, "#000") + rect(1074, 7, 1, 424, "#000") + rect(9, 430, 1066, 1, "#000");
  for (let i = 0; i < 275; i++) a += rect(10.5 + i * 3.875, 431, 1, 2, "#222");
  tickTimes.forEach((t, i) => (a += rect(18 + i * 46.5, 431, 1, 5, "#000")));
  for (let p = 14020; p <= 14150; p += 10) a += rect(1075, py(p), 5, 1, "#000");
  s += `<g class="crisp">${a}</g>`;
  for (let p = 14020; p <= 14150; p += 10) {
    if (p != 14130) s += text(p == 14150 ? 1088 : 1081, py(p) + 4, p, p == 14150 ? "#777" : "#222");
  }
  tickTimes.forEach((t, i) => {
    if (t != "10:52") s += text(19 + i * 46.5, 447, t, "#222", 'text-anchor="middle"');
  });
  s += text(9, 460, "Jun 6, 13");
  s += `<path d="M343 441l24.5 -7 24.5 7v25h-49z" fill="#b4b4fa" stroke="#1616c0"/>` +
    text(367, 448, "10:52", "#1616c0", 'text-anchor="middle"') + text(367, 462, "Jun 6, 13", "#1616c0", 'text-anchor="middle"');
  s += frameIcons(1075, 8, 433);
  s += tag(1080, 73.5, "14132", "#0a6a0a", "#b4fab4") + tag(1080, 181, "14096", "#1616c0", "#b4b4fa");
  $("tickChart").innerHTML = s;
}

// ---------- minute chart ----------
// colour, body top, body bottom, high, low
const candlesA = "b957 965 957 1008,b936 960 930 985,b928 932 915 945,b905 928 905 940,b865 900 855 905,r865 912 862 922,r918 922 905 925,r915 938 878 958,b905 938 900 995,r905 928 903 930,b905 918 880 935,b893 905 885 938,b808 893 775 895,r808 870 770 882,b855 868 830 880,b835 857 797 880,r835 860 833 865,b850 865 845 885,r850 880 838 882,r878 903 875 915,b888 898 870 900,b888 892 880 902,b857 892 820 893,r857 870 855 893,b805 870 768 872,r803 808 785 850,r815 830 797 852,b795 823 792 823,b783 798 770 823,r772 788 718 795,b768 795 740 818,b770 773 760 783,r768 780 765 817,r783 850 783 870,b823 852 800 857,b820 828 808 858,r820 968 815 1000,b950 968 935 995,b912 958 893 962,r900 915 885 920,b857 915 850 922,b863 870 840 880,b838 862 820 878,b803 850 797 862,b798 812 768 815,r805 850 793 857,r840 845 797 850,r840 912 835 918,r910 928 908 938,r925 945 893 952,b912 950 900 953,b915 918 903 950,b912 918 912 948,b875 905 870 918,b835 875 830 900,b820 835 795 838,b815 820 805 828,r815 823 785 852,b805 822 797 830,r812 835 803 845,r825 842 808 845,b828 840 793 847,b785 820 757 838,r783 790 768 805,b740 795 738 800,b598 735 590 740,r603 648 598 650,r648 655 635 683,b628 665 618 675,r625 628 588 630,b610 630 592 635,r605 620 588 625,r617 630 612 640,r628 670 625 672,b663 672 648 678,b653 665 628 670,r648 665 640 683,r665 683 663 686,r685 735 683 740,b722 735 708 742,r728 785 715 788,b768 772 757 785,b768 772 757 787,r768 788 765 805,b770 797 757 800,r770 808 762 812,b735 808 732 812,r733 750 730 762,b748 752 738 765,b757 760 750 778,b733 758 700 760,b710 735 705 738,b700 712 683 712,b677 692 673 698,r667 677 658 683,r678 692 658 693,b675 685 645 690,b670 680 662 692,r670 683 662 685,b668 675 655 685,r668 675 648 685,r683 690 678 717";
const candlesB = "r945 970 940 985,r980 1015 975 1045,b1000 1003 995 1035,b905 985 900 990,b898 905 852 910,r898 908 880 925,r895 905 860 910,r907 920 903 932,b908 915 897 935,b888 905 880 920,b823 883 805 910,r823 845 800 852,b810 845 805 860,b778 808 773 812,b755 783 745 790,b620 752 618 755,r610 655 572 660,r638 652 630 655,b635 642 597 650,r643 730 630 745,b722 730 720 772,r722 778 708 783,r778 800 757 803,b795 800 760 812,b773 790 760 795,r775 808 770 812,r797 828 785 860,r823 842 815 850,r838 922 835 938,b843 922 838 925,b823 837 815 845,r820 830 817 840,b808 825 803 830,r802 808 780 825,r802 863 798 868,r857 870 845 885,r860 912 857 925,r910 925 900 928,r928 940 920 950,r945 950 930 995,b915 945 913 1012,b898 915 890 920,r897 910 892 935,b898 925 895 935,b862 905 857 907,r862 915 857 917,b905 918 870 920,r895 930 890 935,b915 922 870 925,b915 930 900 933,b873 903 867 917,b860 873 830 875,r858 888 855 892,b865 890 855 912,b850 868 840 880,b825 852 802 857,b820 835 812 838,r820 828 810 833,b820 828 810 840,b790 825 775 830,r797 823 788 848,b810 825 795 838,r810 820 803 825,r817 845 810 860,b825 845 820 850,b813 822 808 828,b808 818 802 828,b805 812 785 815,b735 808 700 812,b693 748 690 757,r693 712 680 720,b690 715 685 730,b628 695 625 705,b515 628 482 632,r510 530 500 545,b348 522 335 528,r355 388 345 395";

function candles(list, from, oy) {
  return list.split(",").map((c, i) => {
    const [top, bot, hi, lo] = c.slice(1).split(" ").map((v) => oy + v / 3);
    const x = 9.8 + (from + i) * 5.497;
    const col = c[0] == "b" ? "#36608c" : "#b80c10";
    return rect(x - 0.5, hi, 1, lo - hi, col) + rect(x - 1.5, top, 3, Math.max(1, bot - top), col);
  }).join("");
}

function drawMinuteChart() {
  const py = (p) => 585 + (14140 - p) * 1.716;
  let g = rect(6, 569, 1068, 351, "#eeebe0");
  for (let p = 13950; p <= 14140; p += 10) g += line(6, py(p), 1074, py(p), "#e0deda");
  for (let i = 0; i < 19; i++) g += line(53.8 + i * 54.97, 569, 53.8 + i * 54.97, 920, "#e0deda");
  g += drawProfile(1074, 577.3, 1.716, 920);
  g += rect(6, 735, 698, 28, "#f8f060", 'opacity=".22"') + rect(6, 893, 642, 27, "#f8f060", 'opacity=".25"');
  g += `<path d="M6 735.5H703.5V763H6M6 893.5H648V919M6 850.5H989" fill="none" stroke="#f6f63a"/>`;
  g += rect(6, 868, 1068, 2, "#94e48c") + rect(6, 918, 1068, 1, "#e8d040") + rect(10, 896, 363, 1, "#3aa6b0");
  g += rect(6, 647, 1068, 1, "#7a2028") + rect(6, 648, 1068, 2, "#c84850") + rect(6, 657, 1068, 1, "#0a5a1a") + rect(6, 783, 1068, 1, "#1414b0");
  let s = `<g class="crisp">${g}</g>`;

  const bb = "#2c8030", or = "#f09a48", vw = "#28555c";
  s += `<g class="crisp">${candles(candlesA, 0, 560)}${candles(candlesB, 102, 470)}</g>`;
  s += group(0, 560, KX, KY,
    poly("18,642 60,695 100,740 120,780 147,835 192,850 230,827 283,811 340,817 380,810 410,788 450,775 490,750 520,745 555,745 570,732 590,725 620,720 640,722 690,718 740,722 780,740 812,778 850,780 900,768 960,758 990,740 1010,680 1050,610 1090,558 1120,540 1170,532 1210,535 1250,558 1300,560 1350,580 1380,605 1415,640 1440,645 1465,652 1500,648 1540,633 1568,632", bb) +
    poly("18,1050 70,1053 105,1045 147,1005 190,1002 253,1012 270,995 330,960 370,947 450,933 490,918 555,917 600,963 660,964 690,953 725,963 780,985 860,985 890,963 960,953 995,960 1010,1000 1030,1008 1060,998 1140,900 1200,860 1250,810 1290,808 1310,825 1370,840 1430,825 1500,818 1568,803", bb) +
    poly("18,845 60,880 150,925 200,922 260,910 330,887 420,870 480,845 550,835 600,843 700,840 750,850 810,880 855,883 900,862 1000,850 1050,810 1100,750 1160,705 1230,683 1290,683 1340,705 1400,730 1490,735 1568,720", bb, 1, 'stroke-dasharray="2 1" opacity=".75"') +
    poly("18,813 122,813 122,817 500,817 620,820 830,820 840,823 960,820 1100,813 1330,811 1568,810", vw, 2) +
    poly("18,1040 464,718 570,1000 1568,440", or));
  s += group(570, 470, KX, KY,
    poly("0,902 40,908 90,885 130,882 170,835 210,780 240,660 270,595 303,578 335,592 370,593 440,610 515,610 545,650 580,712 620,748 700,796 750,800 800,843 820,845 870,810 900,793 940,776 1015,768 1060,710 1090,690 1110,580 1130,500 1150,400", bb) +
    poly("0,1073 45,1043 90,1025 135,1010 210,1033 243,1088 275,1093 305,1055 335,1000 410,935 485,930 550,953 640,970 760,973 800,953 850,965 960,938 1020,907 1080,912 1105,945 1120,960 1135,995 1150,1020", bb) +
    poly("0,990 80,965 150,940 220,900 270,850 370,775 430,770 500,770 560,820 620,860 700,888 830,898 900,875 1000,848 1040,830 1090,800 1120,760 1150,710", bb, 1, 'stroke-dasharray="2 1" opacity=".75"') +
    poly("0,1080 140,1077 220,1070 240,1058 300,1047 420,1039 680,1038 790,1033 1020,1030 1080,1025 1130,1005 1135,995 1160,995", vw, 2) +
    poly("1045,935 1100,920 1120,905 1160,895", "#efe3d0", 2) + poly("1045,1130 1090,1122 1130,1100 1160,1092", "#efe3d0", 2) +
    poly("0,710 243,572 606,1012 1135,345", or));

  // signal arrows and trade marks
  const down = (x, y) => `<path d="M${x - 2} ${y - 6}h5v5h3l-5.5 6 -5.5 -6h3z" fill="#4680a8"/>`;
  const rightArrow = (x, y) => `<path d="M${x - 5} ${y - 2}v5h5v3l6 -5.5 -6 -5.5v3z" fill="#4690a0"/>`;
  s += down(372, 740) + down(592, 734) + rightArrow(312, 899) + rightArrow(312, 916);
  s += cross(657, 681, 4, "#f8706c") + cross(657, 693, 4, "#f8706c") + cross(657, 706, 4, "#1a7cac");
  s += cross(972, 639, 4, "#000") + cross(972, 655, 4, "#1a7cac");
  const midT = 'text-anchor="middle"';
  s += text(167.5, 795, "14015 (70)", "#4a6880", midT) + text(207.5, 906, "13959 (-56)", "#c02818", midT);
  s += text(657.5, 656, "14096 (137)", "#4a6880", midT) + text(790.5, 819, "14010 (-86)", "#a02028", midT);
  s += `<svg x="900" y="570" width="174" height="30" viewBox="900 570 174 30">` + text(988, 574, "14144 (134)", "#4a6880", midT) + "</svg>";

  // legend
  s += rect(9, 572, 267, 15, "#faf9f4") + rect(9, 587, 100, 14, "#faf9f4") + rect(9, 602, 38, 14, "#faf9f4") + rect(9, 617, 84, 14, "#faf9f4") + rect(9, 632, 170, 15, "#faf9f4");
  s += led(10, 573) + text(25, 583, "SIM:Gold Aug13 O:14138 H:14144 L:14131 C:14132");
  s += line(10, 594.5, 23, 594.5, "#f09040") + text(25, 598, "ZigZag(50 points)", "#f08830") + text(25, 613, "VPR");
  s += line(10, 624.5, 23, 624.5, "#2d5a78") + text(25, 628, "VWAP  14014", "#3a6280");
  s += line(10, 639.5, 23, 639.5, "#187818") + text(25, 643, "BB(20/2) 14009 - 14069 - 14129", "#187818");
  s += rect(984, 571, 89, 16, "#fafafa") + `<path d="M987 573l5 5h-3v5h-4v-5h-3z" fill="#11e"/>` + text(1070, 583, "+147 (+1,05%)", "#1414d8", 'text-anchor="end"');

  // pivot tags
  const pivot = (y, t, c, bg) => `<path d="M1010.5 ${y - 7}h52l7 7 -7 7.5h-52z" fill="${bg}" stroke="${c}"/>` + text(1013, y + 4, t, c);
  s += pivot(657.5, "R1: 14098", "#0a7a0a", "#b4fab4") + pivot(783.5, "PP: 14024", "#1616c0", "#b4b4fa");
  s += `<svg x="1000" y="905" width="74" height="15" viewBox="1000 905 74 15">` + pivot(917.5, "S1: 13946", "#d0a000", "#fafab4") + "</svg>";

  let a = rect(6, 569, 1069, 1, "#000") + rect(6, 569, 1, 352, "#000") + rect(1074, 569, 1, 352, "#000") + rect(6, 920, 1069, 1, "#000");
  for (let i = 0; i < 194; i++) a += rect(9.5 + i * 5.497, 921, 1, 2, "#222");
  for (let i = 0; i < 19; i++) a += rect(53.5 + i * 54.97, 921, 1, 5, "#000");
  for (let p = 13950; p <= 14140; p += 10) a += rect(1075, py(p), 5, 1, "#000");
  s += `<g class="crisp">${a}</g>`;
  for (let p = 13950; p <= 14140; p += 10) if (p != 14130) s += text(1081, py(p) + 4, p, p == 13950 ? "#888" : "#222");
  for (let i = 0; i < 19; i++) {
    const m = 488 + i * 10;
    s += text(53 + i * 54.97, 937, String(Math.floor(m / 60)).padStart(2, "0") + ":" + String(m % 60).padStart(2, "0"), "#222", midT);
  }
  s += frameIcons(1074, 569, 922) + tag(1079, 598.5, "14132", "#0a6a0a", "#b4fab4");
  $("minuteChart").innerHTML = s;
}

// ---------- dark chart ----------
const palette = { r: "#e81010", g: "#30a830", m: "#d820d8", c: "#30a8e0", w: "#e0e0e0", y: "#f8e020", o: "#f0a020", b: "#1818c8", x: "#888" };
// x, top, bottom, high, low
const lowCandles = "m43 245 285 235 285,r52 240 275 235 278,r61 270 285 268 288,r70 288 318 288 320,w83 313 316 313 316,w92 318 321 318 321,m104 318 330 265 335,r112 318 333 315 350,g122 298 330 298 332,g130 265 290 263 298,r140 258 287 250 288,g148 258 290 255 290,g157 245 257 243 258,r172 245 255 240 258,w181 250 265 250 267,g190 250 265 248 265,o200 228 250 228 250,g214 208 235 205 236,r224 213 238 210 238,x236 232 235 228 242,g250 215 220 213 223,g262 215 220 213 223,g272 213 222 213 230,r284 218 235 215 237,w296 234 236 234 236,x308 232 235 232 238,b317 210 235 208 237,o325 190 197 180 200,b334 200 228 198 235,o352 205 218 205 220,r370 220 232 218 233,g380 195 222 190 222,g387 175 195 173 197,m394 175 183 150 185,c404 180 215 175 217,r418 213 220 213 222,y431 213 232 213 232,g440 222 237 215 260,g448 205 220 205 222,x457 205 212 205 215,g472 185 195 180 197,r481 188 197 188 200,r490 195 208 195 208,w505 215 219 213 220,b523 208 220 205 222,g533 195 215 190 217,b549 188 215 185 217,r556 198 235 190 238,r565 235 260 230 272,g574 243 255 240 258,y583 243 260 240 262,g592 228 245 225 247,w605 220 223 220 224,g625 205 215 203 217,g633 197 207 195 210,w648 206 209 206 209,r660 215 220 213 222,b687 197 215 195 217,g697 192 205 190 207,b711 170 200 168 203,r720 175 205 172 208,r737 185 197 180 200,g745 182 195 180 197,c754 130 175 125 180,c763 97 130 80 135,g770 80 97 75 100,r778 85 92 37 95,r788 97 112 95 115,g797 80 100 75 118,r806 78 100 70 103,g815 52 80 45 85,g824 30 68 28 70,y832 10 30 5 60,g847 12 42 5 45,r856 12 33 8 55,r865 25 55 20 62,x875 50 58 48 68,c884 28 55 25 82,w893 25 48 22 55,g908 30 65 25 68,g916 -5 25 -10 35";
const highCandles = "m926 730 795 725 798,y934 728 750 722 755,y949 720 740 700 745,c958 520 700 495 715,r967 520 550 510 560,y976 525 545 495 560,r985 510 540 495 562,g994 530 550 525 568,r1009 535 565 530 570,r1018 565 590 560 597,w1027 550 590 545 597,w1036 545 560 540 602,c1045 330 545 290 555,r1063 300 345 275 350,r1069 325 350 310 362,g1078 300 350 290 362,g1087 275 300 258 335,w1096 295 297 295 350,r1105 310 350 295 358";
const volumeCandles = "y52 664 668 664 668,x97 665 668 660 672,m139 664 668 664 668,g181 664 667 664 667,g220 660 664 657 668,r310 662 665 658 667,g352 660 663 655 665,g394 655 660 650 665,r439 656 662 653 664,g481 658 661 654 663,r523 658 661 656 663,r565 660 664 657 667,g611 661 663 661 663,g652 659 661 659 661,g694 659 661 659 661,x736 657 659 654 662,c778 647 658 640 660,g823 638 647 636 650,y865 637 641 635 645,g907 638 643 635 647,m949 628 637 626 640,m994 610 628 605 630,m1036 607 612 604 614,c1078 580 607 577 609,r1120 578 587 572 589";

function darkCandles(list) {
  return list.split(",").map((c) => {
    const [x, t, b, h, l] = c.slice(1).split(" ").map(Number);
    const col = palette[c[0]];
    const body = "gc".includes(c[0]) ? rect(x - 3, t, 6, Math.max(2, b - t), "#000", `stroke="${col}" stroke-width="3"`) : rect(x - 4, t, 8, b - t, col);
    return rect(x - 1, h, 3, l - h, col) + body;
  }).join("");
}

function drawNinjaChart() {
  const K = 1 / 3;
  const go = "#c08820", gold = "#e0a030";
  const py = (p) => 517 + (1414 - p) * 25.5;
  let s = group(1420, 680, K, K,
    darkCandles(lowCandles) +
    poly("52,213 97,235 140,256 180,253 230,240 280,220 330,200 395,180 440,172 485,159 525,154 570,154 620,149 690,139 735,142 780,120 820,92 870,65 940,0", gold) +
    poly("52,325 97,330 140,334 210,333 270,325 320,318 395,298 440,292 490,282 540,275 610,270 650,262 690,257 735,247 790,230 850,210 905,195 950,172 1000,142 1040,118 1078,85", gold) +
    poly("52,436 97,428 140,412 190,416 265,427 310,427 400,415 480,407 570,394 620,390 695,373 735,352 778,344 850,346 905,349 950,356 995,400 1035,418 1078,475", gold) +
    poly("43,535 440,535 455,532 760,532 780,529 860,526 945,523 965,512 985,506 1035,500 1050,490 1090,478", "#2f8ff0", 2, 'stroke-dasharray="8 3 2 3"') +
    rect(204, 187, 18, 18, "#0ff", 'stroke="#fff" stroke-width="3"') +
    darkCandles(volumeCandles));
  const sq = (x, y, c) => rect(x - 9, y - 9, 18, 18, c, 'stroke="#fff" stroke-width="3"');
  s += group(1420, 420, K, K,
    darkCandles(highCandles) + poly("915,805 955,765 995,675 1037,605 1050,560 1078,475", go) +
    `<path d="M994 518h30l-15 14z" fill="#d01830" stroke="#fff" stroke-width="2"/><path d="M933 695h24" stroke="#f33" stroke-width="4"/><circle cx="934" cy="732" r="7" fill="#6ef"/><path d="M924 763l10-12 16 12z" fill="#4df"/>` +
    [[1063, 290], [1045, 328], [1045, 364], [1045, 381], [1045, 458], [1045, 482], [1045, 533], [958, 572], [958, 596], [958, 636], [958, 625], [958, 657], [949, 709], [958, 709]].map((p) => sq(p[0], p[1], "#0ef")).join("") +
    sq(1105, 311, "#e81020") + sq(1069, 374, "#d01830") + sq(967, 556, "#d01830"));

  s += `<g class="crisp">` + rect(1845, 487, 1, 422, "#eee") + rect(1431, 864, 468, 1, "#eee") + rect(1431, 908, 415, 1, "#eee") + "</g>";
  for (let p = 1401; p <= 1414; p++) {
    s += line(1846, py(p) + 0.5, 1852, py(p) + 0.5, "#ddd");
    if (p != 1406) s += text(1853, py(p) + 4, p + ",0");
  }
  const box = (y, t, bg, c) => `<path d="M1847 ${y}l6 -6.5h36v13h-36z" fill="${bg}" stroke="${c}"/>` + text(1854, y + 4, t, "#fff", bg == "#ffa500" ? 'class="dark"' : "");
  s += box(493.5, "1414,7", "#000", "#ccc") + box(536, "1413,2", "#000", "#eee") + box(578, "1411,6", "#ffa500", "#ffa500") + box(609, "1410,3", "#000", "#eee");
  s += box(708, "1406,5", "#ffa500", "#ffa500") + box(724, "1405,9", "#000", "#eee") + box(838, "1401,4", "#1e90ff", "#1e90ff") + box(875, "1413,2", "#000", "#eee");
  s += rect(1876, 482, 22, 21, "#eee", 'stroke="#999" stroke-width="2"') + `<path d="M1882 489h10l-5 6z"/>`;
  s += `<svg x="1431" y="483" width="414" height="24" viewBox="1431 483 414 24">` + text(1434, 497, "GC 08-13 (12 Seconds), Recon Tape V4, Depth&amp;Sales SIM V4.1, Bollinger(GC 08-13") + "</svg>";
  s += text(1434, 886, "GC 08-13 (1 Min), anaBetterVolumeOverlay(GC 08-13 (1 Min),20,10)") + text(1434, 906, "© 2013 NinjaTrader, LLC");
  ["17:35", "17:40", "17:45", "17:50", "17:55"].forEach((t, i) => {
    s += rect(1452 + i * 71, 909, 1, 6, "#eee") + text(1452 + i * 71, 925, t, "#fff", 'text-anchor="middle"');
  });
  $("ninjaChart").innerHTML = s;
}

// ---------- tables ----------
function fillContracts() {
  "Active Jun13 Jul13 Aug13 Oct13 Dec13 Feb14 Apr14 Jun14 Aug14 Oct14 Dec14 Feb15 Apr15 Jun15".split(" ").forEach((n) => {
    const b = document.createElement("button");
    b.textContent = n;
    if (n == "Aug13") b.className = "active";
    $("contracts").appendChild(b);
  });
}

function fillLadder() {
  const totals = [10, 10, 19, 49, 146, 113, 161, 262, 298, 407, 212, 185, 121, 84, 153, 109, 60, 15, 20, 16, 17, 22, 21, 7, 28, 19, 59, 20, 27, 59, 11, 36, 70, 89, 190, 101, 450, 310, 365, 556, 127, 118, 96, 56, 130, 43, 51, 24, 165];
  const offers = { 14142: 9, 14141: 6, 14140: 9, 14139: 7, 14138: 14, 14137: 5, 14136: 8, 14135: 29, 14134: 9, 14133: 8 };
  const bids = { 14131: 2, 14130: 12, 14129: 6, 14128: 13, 14127: 15, 14126: 18, 14125: 10, 14124: 23, 14123: 9, 14122: 16 };
  const stub = '<td></td><td class="slot"></td><td class="slot"></td><td></td><td class="slot"></td><td class="slot"></td>';
  let s = `<tr class="first">${stub}</tr>`;
  for (let p = 14158; p >= 14096; p--) {
    const t = totals[14144 - p];
    const cls = p == 14144 ? "high" : p == 14132 ? "trade" : "";
    s += `<tr><td class="total" style="background-size:${t ? Math.max(1, t * 0.081).toFixed(1) : 0}% 100%">${t || ""}</td>
      <td class="slot ${bids[p] ? "bid" : ""}">${bids[p] || ""}</td><td class="slot"></td>
      <td class="${cls}">${p == 14132 ? "14132 / 1" : p}</td>
      <td class="slot"></td><td class="slot ${offers[p] ? "offer" : ""}">${offers[p] || ""}</td></tr>`;
  }
  $("ladder").innerHTML = s + `<tr class="last-row">${stub}</tr>`;
}

function fillDepth() {
  // total, price, bid size, sold, bought, ask size
  const rows = [
    "|1414,7||||", "|1414,6||||", "|1414,5||||", "10|1414,4|||10|", "10|1414,3|||10|109", "19|1414,2||3|16|9", "49|1414,1||21|28|6",
    "146|1414,0||67|79|9", "110|1413,9||19|91|7", "160|1413,8||37|123|14", "260|1413,7||146|114|5", "297|1413,6||148|149|8",
    "404|1413,5||228|176|29", "209|1413,4||127|82|14", "169|1413,3||77|92|8", "121|1413,2||69|52|", "83|1413,1|3|48|35|",
    "152|1413,0|12|35|117|", "106|1412,9|7|41|65|", "57|1412,8|13|24|33|", "14|1412,7|17|4|10|", "19|1412,6|18|11|8|",
    "15|1412,5|10|2|13|", "17|1412,4|24|2|15|", "21|1412,3|9|2|19|", "21|1412,2|13|10|11|", "7|1412,1|126||7|", "28|1412,0|||28|",
    "19|1411,9|||19|", "59|1411,8|||59|", "20|1411,7||6|14|", "27|1411,6||12|15|", "59|1411,5||5|54|", "11|1411,4|||11|", "36|1411,3||3|33|",
  ];
  const cell = { "1413,5": [5, "#ff00ff"], "1413,3": [4, "#ff0000"], "1413,2": [4, "#d0d0d8"], "1413,1": [3, "#00ff40"], "1412,4": [2, "#8000ff"] };
  let s = '<tr class="stub"><td></td><td class="grey"></td><td class="buy"></td><td></td><td></td><td class="sell"></td></tr>';
  rows.forEach((r, i) => {
    const v = r.split("|");
    const cur = v[1] == "1413,2";
    const cls = ["vol" + (cur ? " yel" : ""), i < 3 ? "grey" : cur ? "px yel" : "px", "buy", "cr", "cb", "sell"];
    s += `<tr class="${cur ? "mark" : ""}">`;
    v.forEach((t, k) => {
      let st = k == 0 ? `background-size:${(v[0] * 0.055).toFixed(1)}% 100%` : "";
      if (cell[v[1]] && cell[v[1]][0] == k) st = `background:${cell[v[1]][1]}`;
      if (t == "109" || t == "126") st = "color:#ffe020";
      s += `<td class="${cls[k]}" style="${st}">${t}</td>`;
    });
    s += "</tr>";
  });
  $("depth").innerHTML = s;
}

function fillTape() {
  const rows = "c 54 1413,0 10;c 46 1412,9 15;m 46 1412,8 10;R 46 1412,9 31;m 46 1413,0 10;m 46 1413,2 23;g 40 1413,3 26;m 40 1413,3 18;m 34 1413,4 14;g 32 1413,6 12;R 27 1414,0 38;W 26 1414,0 34;c 26 1413,9 12;m 24 1413,4 10;m 23 1413,5 12;r 21 1413,6 11;C 10 1413,9 12;C 10 1413,8 16;m 09 1412,2 10;W 09 1413,5 50;G 09 1413,4 11;C 09 1413,2 14;C 09 1413,1 18;W 09 1413,0 60;C 09 1412,9 25;W 09 1412,8 32;G 09 1412,5 13;G 09 1412,4 14;C 09 1412,3 19;G 09 1412,2 11;C 09 1412,0 28;C 09 1411,9 19;W 09 1411,8 41";
  $("tape").innerHTML = rows.split(";").map((r) => {
    const [c, sec, px, n] = r.split(" ");
    return `<tr class="${c}"><td>17:57:${sec}</td><td>${px}</td><td>${n}</td></tr>`;
  }).join("");
}

function fillQuotes() {
  const rows = "r 3,2 2 0 3,4;r 3,4 4 0 3,5;r 3,5 6 0 3,6;r 3,6 5 0 3,7;r 3,8 59 6 3,9;g 3,7 1 1 3,9;r 3,8 1 0 4,0;g 3,7 0 5 3,9;r 3,7 2 0 3,9;g 3,7 0 7 3,8;g 3,4 4 7 3,6;g 3,4 0 1 3,5;r 3,5 1 0 3,6;g 3,4 3 3 3,6;g 3,3 1 9 3,4;g 3,2 0 4 3,3;r 3,3 14 0 3,4;r 3,4 8 0 3,5;r 3,5 3 0 3,6;r 3,5 5 0 3,7;r 3,7 3 1 3,8;r 3,7 7 0 3,9;g 3,7 0 3 3,8;r 3,8 3 1 4,0;r 3,9 4 0 4,0;r 3,9 0 1 4,1;r 4,0 5 6 4,2;g 4,0 0 1 4,1;r 4,0 4 1 4,3;g 4,0 0 1 4,1;r 4,1 4 1 4,3;r 4,2 3 0 4,4;g 4,1 1 18 4,2";
  $("quotes").innerHTML = rows.split(";").map((r) => {
    const [c, bid, n1, n2, ask] = r.split(" ");
    return `<tr class="${c}"><td>141${bid}</td><td>${n1}</td><td>${n2}</td><td>141${ask}</td></tr>`;
  }).join("");
}

drawTickChart();
drawMinuteChart();
drawNinjaChart();
fillContracts();
fillLadder();
fillDepth();
fillTape();
fillQuotes();
```
